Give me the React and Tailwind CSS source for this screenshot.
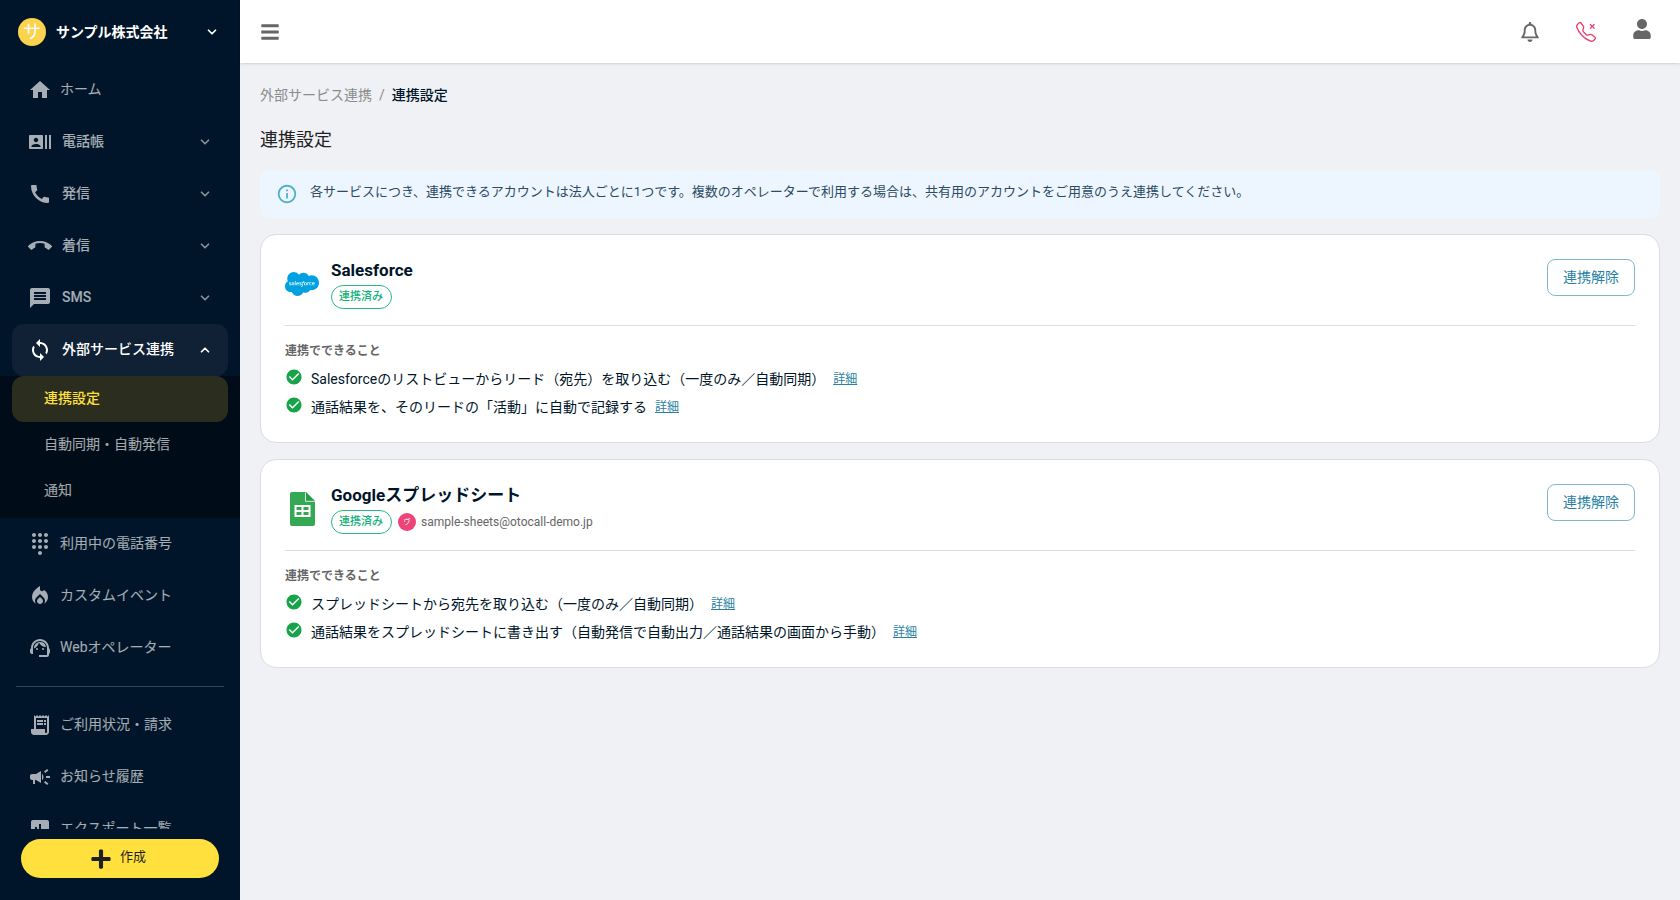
import {
    MdHome,
    MdRecentActors,
    MdCall,
    MdCallEnd,
    MdMessage,
    MdSync,
    MdDialpad,
    MdLocalFireDepartment,
    MdSupportAgent,
    MdReceiptLong,
    MdCampaign,
    MdAssessment,
    MdInfoOutline,
    MdCheckCircle
} from 'react-icons/md';
import { FaBars, FaPlus, FaUser, FaSalesforce } from 'react-icons/fa';
import { FaRegBell } from 'react-icons/fa6';
import { BsTelephoneX } from 'react-icons/bs';
import { ChevronDown, ChevronUp } from 'lucide-react';

const mainMenu = [
    { label: 'ホーム', icon: MdHome },
    { label: '電話帳', icon: MdRecentActors, expandable: true },
    { label: '発信', icon: MdCall, expandable: true },
    { label: '着信', icon: MdCallEnd, expandable: true },
    { label: 'SMS', icon: MdMessage, expandable: true },
    {
        label: '外部サービス連携',
        icon: MdSync,
        expandable: true,
        open: true,
        children: [
            { label: '連携設定', active: true },
            { label: '自動同期・自動発信' },
            { label: '通知' }
        ]
    },
    { label: '利用中の電話番号', icon: MdDialpad },
    { label: 'カスタムイベント', icon: MdLocalFireDepartment },
    { label: 'Webオペレーター', icon: MdSupportAgent }
];

const subMenu = [
    { label: 'ご利用状況・請求', icon: MdReceiptLong },
    { label: 'お知らせ履歴', icon: MdCampaign },
    { label: 'エクスポート一覧', icon: MdAssessment }
];

const services = [
    {
        name: 'Salesforce',
        logo: <FaSalesforce className="size-[34px] text-[#00a1e0]" />,
        features: [
            'Salesforceのリストビューからリード（宛先）を取り込む（一度のみ／自動同期）',
            '通話結果を、そのリードの「活動」に自動で記録する'
        ]
    },
    {
        name: 'Googleスプレッドシート',
        logo: <SheetsLogo />,
        account: 'sample-sheets@otocall-demo.jp',
        features: [
            'スプレッドシートから宛先を取り込む（一度のみ／自動同期）',
            '通話結果をスプレッドシートに書き出す（自動発信で自動出力／通話結果の画面から手動）'
        ]
    }
];

function SheetsLogo() {
    return (
        <svg viewBox="0 0 25 34" className="h-[34px] w-[25px]" aria-hidden="true">
            <path d="M2 0h14l9 9v23a2 2 0 0 1-2 2H2a2 2 0 0 1-2-2V2a2 2 0 0 1 2-2z" fill="#34a853" />
            <path d="M16 0l9 9h-9z" fill="#188038" opacity="0.35" />
            <path d="M15.5 0.5v8.8H25" fill="none" stroke="#fff" strokeWidth="0.8" />
            <path
                d="M4.5 13h16v12h-16zM6.5 15v3h5v-3zM13.5 15v3h5v-3zM6.5 20v3h5v-3zM13.5 20v3h5v-3z"
                fill="#fff"
                fillRule="evenodd"
            />
        </svg>
    );
}

function MenuItem({ item }) {
    const Icon = item.icon;
    const Arrow = item.open ? ChevronUp : ChevronDown;

    if (!item.expandable) {
        return (
            <li>
                <a href="#" className="mx-3 flex h-[52px] items-center gap-2 rounded-lg px-4 text-white/65">
                    <Icon className="size-6 shrink-0" />
                    <span className="pb-0.5">{item.label}</span>
                </a>
            </li>
        );
    }

    return (
        <li>
            <div className="px-3">
                <button
                    type="button"
                    aria-expanded={Boolean(item.open)}
                    className={`flex h-[52px] w-full items-center gap-2.5 rounded-xl px-4 text-left font-medium ${
                        item.open ? 'bg-[#102136] text-white' : 'text-white/65'
                    }`}
                >
                    <Icon className="size-6 shrink-0" />
                    <span className="flex-1 pb-0.5">{item.label}</span>
                    <Arrow strokeWidth={3} className={`size-3.5 shrink-0 ${item.open ? '' : 'opacity-80'}`} />
                </button>
            </div>
            {item.children && (
                <ul className="bg-[#000c17] pb-1">
                    {item.children.map((child) => (
                        <li key={child.label} className="px-3">
                            <a
                                href="#"
                                className={`flex h-[46px] items-center rounded-xl px-8 pb-0.5 ${
                                    child.active ? 'bg-[#2b2e1e] font-medium text-[#ffe03d]' : 'text-white/65'
                                }`}
                            >
                                {child.label}
                            </a>
                        </li>
                    ))}
                </ul>
            )}
        </li>
    );
}

function Sidebar() {
    return (
        <aside className="flex w-60 shrink-0 flex-col bg-[#001529] text-sm">
            <button type="button" className="flex h-16 shrink-0 items-center pr-[21px] pl-[18px] text-left text-white">
                <span className="flex size-7 items-center justify-center rounded-full bg-[#fbd34d] text-lg leading-none">
                    サ
                </span>
                <span className="ml-2.5 flex-1 font-bold">サンプル株式会社</span>
                <ChevronDown strokeWidth={3} className="size-3.5" />
            </button>

            <nav className="min-h-0 flex-1 overflow-hidden">
                <ul>
                    {mainMenu.map((item) => (
                        <MenuItem key={item.label} item={item} />
                    ))}
                </ul>
                <hr className="mx-4 my-3 border-white/20" />
                <ul>
                    {subMenu.map((item) => (
                        <MenuItem key={item.label} item={item} />
                    ))}
                </ul>
            </nav>

            <div className="px-[21px] pt-2.5 pb-[22px]">
                <button
                    type="button"
                    className="flex h-[39px] w-full items-center justify-center gap-2 rounded-full bg-[#ffe03d] pr-1 text-[13px] text-[#1f1f1f]"
                >
                    <FaPlus className="size-[22px]" />
                    <span className="pb-0.5">作成</span>
                </button>
            </div>
        </aside>
    );
}

function Topbar() {
    return (
        <header className="z-10 flex h-[63px] shrink-0 items-center justify-between bg-white pr-[29px] pl-[21px] text-[#666] shadow">
            <button type="button" aria-label="メニュー">
                <FaBars className="h-5 w-[18px]" />
            </button>
            <div className="flex items-center gap-[37px]">
                <button type="button" aria-label="お知らせ">
                    <FaRegBell className="h-5 w-[18px]" />
                </button>
                <button type="button" aria-label="通話" className="text-[#e83e6b]">
                    <BsTelephoneX className="size-5" />
                </button>
                <button type="button" aria-label="アカウント" className="pb-1.5">
                    <FaUser className="h-5 w-[18px]" />
                </button>
            </div>
        </header>
    );
}

function ServiceCard({ service }) {
    return (
        <section className="rounded-2xl border border-[#dcdde0] bg-white px-6 pt-6 pb-[21px]">
            <div className="flex items-start justify-between border-b border-[#dcdde0] pb-4">
                <div className="flex items-center gap-3">
                    <div className="flex w-[34px] justify-center">{service.logo}</div>
                    <div>
                        <h2 className="text-[17px] leading-[22px] font-bold text-[#001529]">{service.name}</h2>
                        <div className="mt-1 flex items-center">
                            <span className="flex h-6 items-center rounded-full border border-[#2bb68a] pr-2 pl-[7px] text-[11px] font-medium text-[#12b07c]">
                                連携済み
                            </span>
                            {service.account && (
                                <>
                                    <span className="ml-1.5 flex size-[18px] items-center justify-center rounded-full bg-[#ec4378] text-[7px] text-white">
                                        ヴ
                                    </span>
                                    <span className="ml-[5px] text-xs text-[#666]">{service.account}</span>
                                </>
                            )}
                        </div>
                    </div>
                </div>
                <button
                    type="button"
                    className="h-[37px] rounded-lg border border-[#7fb8cf] px-[15px] pb-0.5 text-sm text-[#2a7fa3]"
                >
                    連携解除
                </button>
            </div>

            <h3 className="mt-[17px] text-xs leading-4 font-bold text-[#666]">連携でできること</h3>
            <ul className="mt-1.5">
                {service.features.map((feature) => (
                    <li key={feature} className="flex h-7 items-center text-sm text-[#001529]">
                        <MdCheckCircle className="mb-1 size-[18px] text-[#16a34a]" />
                        <span className="ml-2">{feature}</span>
                        <a href="#" className="ml-2 text-xs text-[#2a7fa3] underline">
                            詳細
                        </a>
                    </li>
                ))}
            </ul>
        </section>
    );
}

function App() {
    return (
        <div className="flex h-screen overflow-hidden bg-[#f0f1f5] font-['Roboto','Noto_Sans_CJK_JP',sans-serif]">
            <Sidebar />
            <div className="flex min-w-0 flex-1 flex-col">
                <Topbar />
                <main className="flex-1 overflow-auto px-5 pt-5">
                    <nav aria-label="パンくず" className="flex h-6 items-center gap-[7px] text-sm text-[#8c8c8c]">
                        <a href="#">外部サービス連携</a>
                        <span>/</span>
                        <span className="font-medium text-[#001529]">連携設定</span>
                    </nav>
                    <h1 className="mt-[21px] text-lg leading-6 text-[#222]">連携設定</h1>

                    <div className="mt-[18px] flex h-12 items-center gap-3 rounded-lg bg-[#edf6fe] px-4 text-[13px] text-[#2c4a63]">
                        <MdInfoOutline className="size-[22px] text-[#52b0cb]" />
                        <p className="pb-1">
                            各サービスにつき、連携できるアカウントは法人ごとに1つです。複数のオペレーターで利用する場合は、共有用のアカウントをご用意のうえ連携してください。
                        </p>
                    </div>

                    <div className="mt-4 flex flex-col gap-4">
                        {services.map((service) => (
                            <ServiceCard key={service.name} service={service} />
                        ))}
                    </div>
                </main>
            </div>
        </div>
    );
}

export default App;
